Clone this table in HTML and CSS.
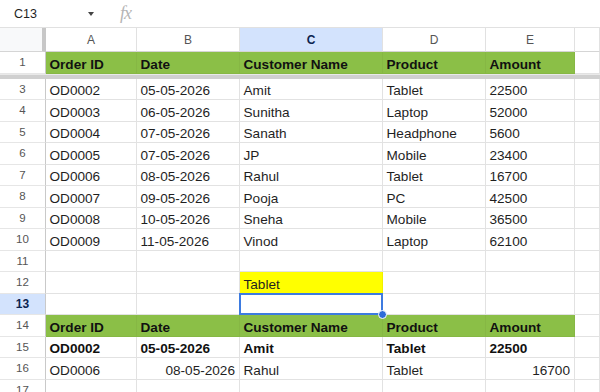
FILE: index.html
```html
<!DOCTYPE html>
<html>
<head>
<meta charset="utf-8">
<link rel="stylesheet" href="styles.css">
</head>
<body>
<div class="app">
  <div class="formula-bar">
    <div class="namebox"><span class="ref">C13</span><span class="caret"></span></div>
    <span class="fx">fx</span>
  </div>
  <div class="sheet">
    <div class="row colhead">
      <div class="corner"></div>
      <div class="ch">A</div><div class="ch">B</div><div class="ch sel">C</div><div class="ch">D</div><div class="ch">E</div><div class="ch"></div>
    </div>
    <div class="row">
      <div class="rh">1</div>
      <div class="c g b">Order ID</div><div class="c g b">Date</div><div class="c g b">Customer Name</div><div class="c g b">Product</div><div class="c g b">Amount</div><div class="c"></div>
    </div>
    <div class="freeze"></div>
    <div class="row"><div class="rh">3</div><div class="c">OD0002</div><div class="c">05-05-2026</div><div class="c">Amit</div><div class="c">Tablet</div><div class="c">22500</div><div class="c"></div></div>
    <div class="row"><div class="rh">4</div><div class="c">OD0003</div><div class="c">06-05-2026</div><div class="c">Sunitha</div><div class="c">Laptop</div><div class="c">52000</div><div class="c"></div></div>
    <div class="row"><div class="rh">5</div><div class="c">OD0004</div><div class="c">07-05-2026</div><div class="c">Sanath</div><div class="c">Headphone</div><div class="c">5600</div><div class="c"></div></div>
    <div class="row"><div class="rh">6</div><div class="c">OD0005</div><div class="c">07-05-2026</div><div class="c">JP</div><div class="c">Mobile</div><div class="c">23400</div><div class="c"></div></div>
    <div class="row"><div class="rh">7</div><div class="c">OD0006</div><div class="c">08-05-2026</div><div class="c">Rahul</div><div class="c">Tablet</div><div class="c">16700</div><div class="c"></div></div>
    <div class="row"><div class="rh">8</div><div class="c">OD0007</div><div class="c">09-05-2026</div><div class="c">Pooja</div><div class="c">PC</div><div class="c">42500</div><div class="c"></div></div>
    <div class="row"><div class="rh">9</div><div class="c">OD0008</div><div class="c">10-05-2026</div><div class="c">Sneha</div><div class="c">Mobile</div><div class="c">36500</div><div class="c"></div></div>
    <div class="row"><div class="rh">10</div><div class="c">OD0009</div><div class="c">11-05-2026</div><div class="c">Vinod</div><div class="c">Laptop</div><div class="c">62100</div><div class="c"></div></div>
    <div class="row"><div class="rh">11</div><div class="c"></div><div class="c"></div><div class="c"></div><div class="c"></div><div class="c"></div><div class="c"></div></div>
    <div class="row"><div class="rh">12</div><div class="c"></div><div class="c"></div><div class="c y">Tablet</div><div class="c"></div><div class="c"></div><div class="c"></div></div>
    <div class="row"><div class="rh sel">13</div><div class="c"></div><div class="c"></div><div class="c active"><span class="handle"></span></div><div class="c"></div><div class="c"></div><div class="c"></div></div>
    <div class="row"><div class="rh">14</div><div class="c g b">Order ID</div><div class="c g b">Date</div><div class="c g b">Customer Name</div><div class="c g b">Product</div><div class="c g b">Amount</div><div class="c"></div></div>
    <div class="row"><div class="rh">15</div><div class="c b">OD0002</div><div class="c b">05-05-2026</div><div class="c b">Amit</div><div class="c b">Tablet</div><div class="c b">22500</div><div class="c"></div></div>
    <div class="row"><div class="rh">16</div><div class="c">OD0006</div><div class="c r">08-05-2026</div><div class="c">Rahul</div><div class="c">Tablet</div><div class="c r">16700</div><div class="c"></div></div>
    <div class="row"><div class="rh">17</div><div class="c"></div><div class="c"></div><div class="c"></div><div class="c"></div><div class="c"></div><div class="c"></div></div>
  </div>
</div>
</body>
</html>
```

FILE: styles.css
```css
* { box-sizing: border-box; }
html, body { margin: 0; padding: 0; background: #fff; }
body { width: 600px; height: 392px; overflow: hidden; font-family: "Liberation Sans", Arial, sans-serif; }

.formula-bar {
  height: 28px;
  display: flex;
  align-items: center;
  border-bottom: 1px solid #e1e1e1;
}
.namebox {
  width: 120px;
  display: flex;
  align-items: center;
  padding-left: 14px;
}
.ref { font-size: 12.5px; color: #1f1f1f; width: 74px; }
.caret {
  width: 0; height: 0;
  border-left: 3.5px solid transparent;
  border-right: 3.5px solid transparent;
  border-top: 4px solid #444;
}
.fx {
  font-family: "Liberation Serif", serif;
  font-style: italic;
  font-size: 18px;
  color: #b5b5b5;
  letter-spacing: -1px;
  margin-top: -1px;
}

.row {
  display: grid;
  grid-template-columns: 46px 91px 103px 143px 103px 89px 1fr;
  height: 21.53px;
}
.colhead { height: 24px; }

.corner {
  background: #f8f9fa;
  border-right: 4px solid #c7c7c7;
  border-bottom: 1px solid #d5d5d5;
}
.ch {
  display: flex;
  align-items: center;
  justify-content: center;
  font-size: 12px;
  color: #555;
  border-right: 1px solid #e1e1e1;
  border-bottom: 1px solid #d5d5d5;
  padding-top: 1px;
}
.ch.sel { background: #d3e3fd; color: #0b2350; font-weight: bold; }

.rh {
  display: flex;
  align-items: center;
  justify-content: center;
  font-size: 11.5px;
  color: #555;
  border-right: 1px solid #c9c9c9;
  border-bottom: 1px solid #e6e6e6;
}
.rh.sel { background: #d3e3fd; color: #0b2350; font-weight: bold; font-size: 12px; }

.freeze {
  height: 5px;
  background: #d0d0d0;
  border-top: 1px solid #e9e9e9;
}

.c {
  position: relative;
  display: flex;
  align-items: flex-end;
  padding: 0 4px 0 3.5px;
  font-size: 13.6px;
  line-height: 16px;
  color: #1f1f1f;
  white-space: nowrap;
  overflow: visible;
  border-right: 1px solid #e2e2e2;
  border-bottom: 1px solid #e2e2e2;
}
.c.g { background: #8bbf47; border-color: #86b744; color: #111; }
.c.b { font-weight: bold; color: #111; }
.c.y { background: #ffff00; border-color: #f0f000; }
.c.r { justify-content: flex-end; }

.c.active::after {
  content: "";
  position: absolute;
  left: -1px; top: -1px; right: -1px; bottom: -1px;
  border: 2px solid #3d7be0;
}
.handle {
  position: absolute;
  right: -5px;
  bottom: -5px;
  width: 9px;
  height: 9px;
  border-radius: 50%;
  background: #2e6bd8;
  border: 1px solid #fff;
  z-index: 2;
}
```
